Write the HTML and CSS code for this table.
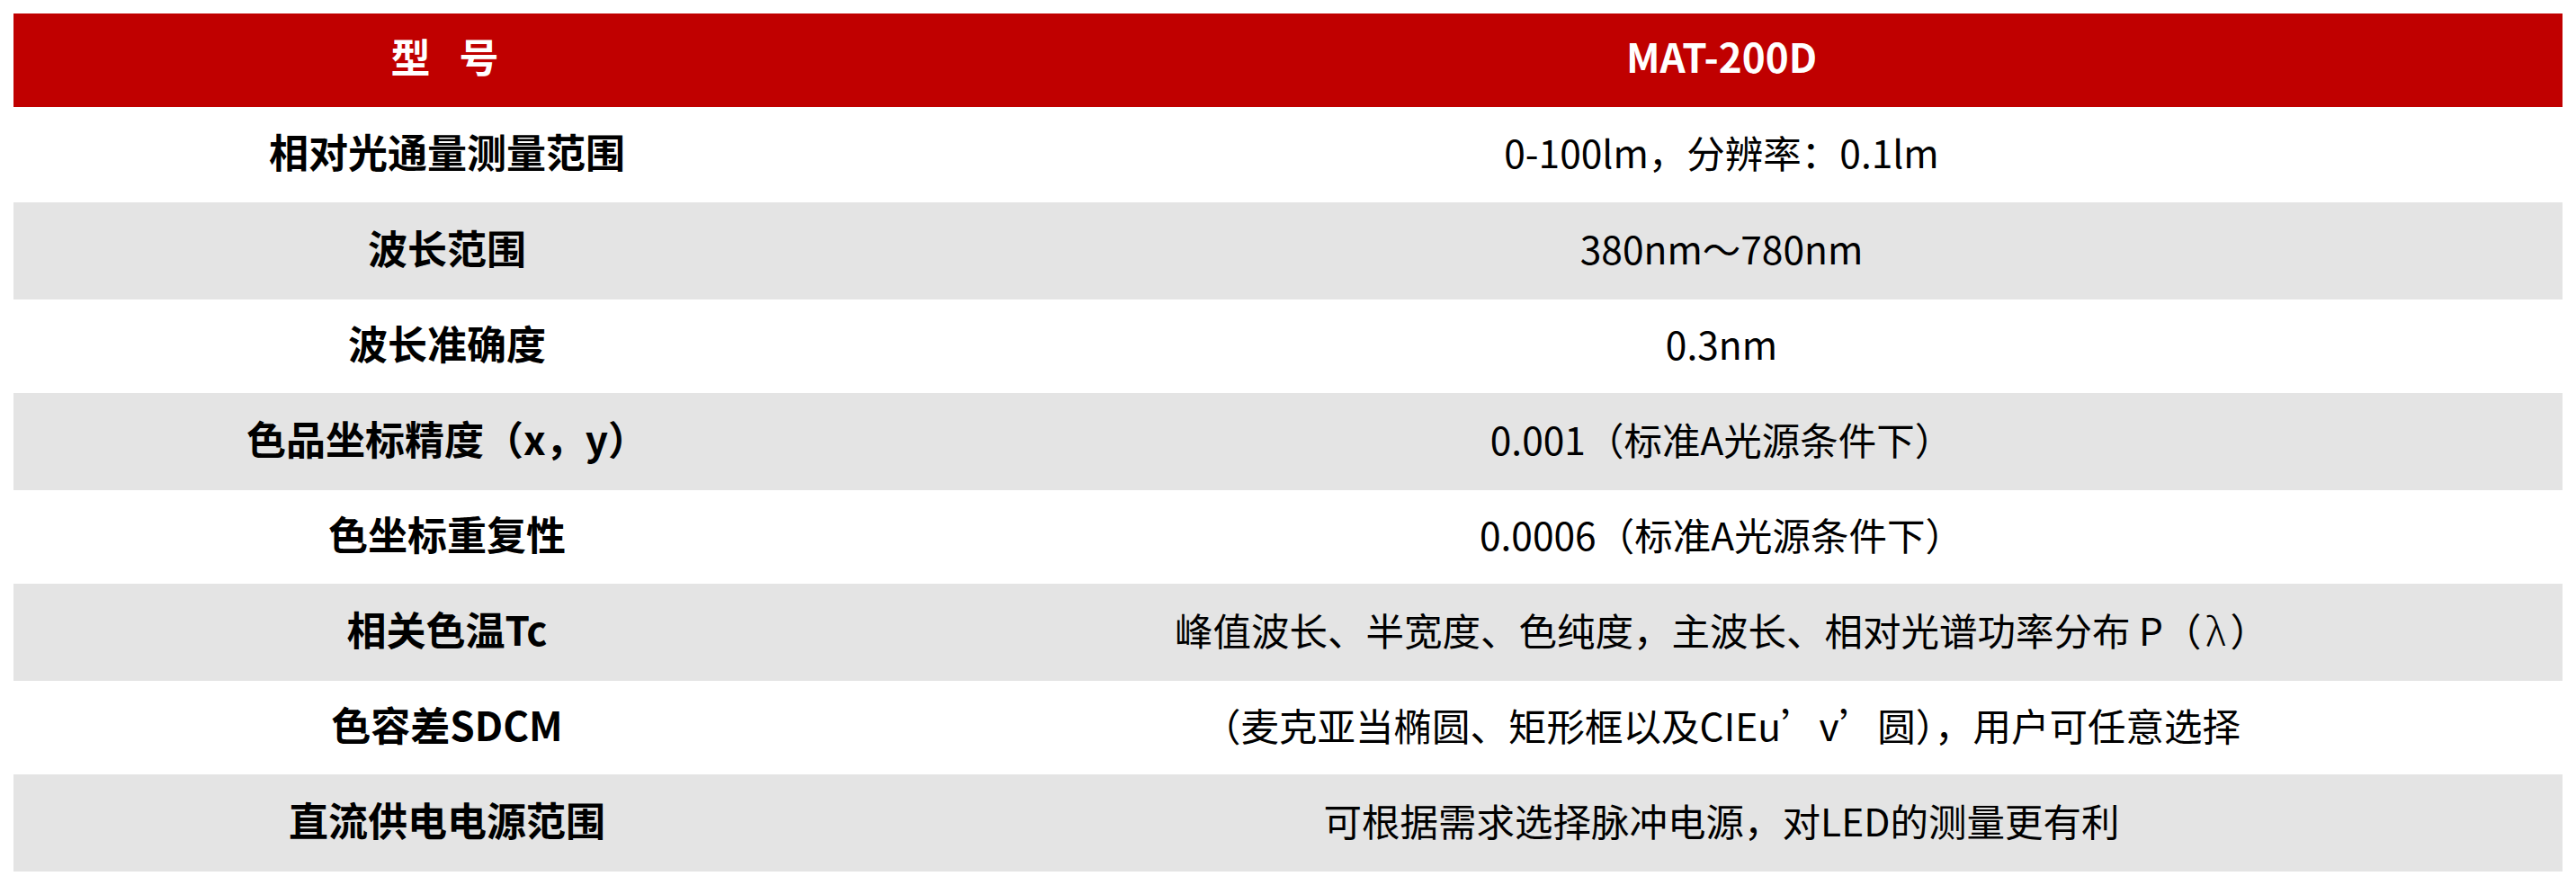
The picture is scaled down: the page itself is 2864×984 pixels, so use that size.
FILE: index.html
```html
<!DOCTYPE html>
<html lang="zh-CN">
<head>
<meta charset="utf-8">
<title>MAT-200D</title>
<link rel="stylesheet" href="styles.css">
</head>
<body>
<table class="spec">
  <colgroup><col class="c-name"><col class="c-val"></colgroup>
  <thead>
    <tr class="head"><th class="hname">型&ensp;号</th><th class="hval">MAT-200D</th></tr>
  </thead>
  <tbody>
    <tr class="r first"><td class="name">相对光通量测量范围</td><td class="val">0-100lm，分辨率：0.1lm</td></tr>
    <tr class="r gray"><td class="name">波长范围</td><td class="val">380nm～780nm</td></tr>
    <tr class="r white"><td class="name">波长准确度</td><td class="val">0.3nm</td></tr>
    <tr class="r gray"><td class="name">色品坐标精度（x，y）</td><td class="val">0.001（标准A光源条件下）</td></tr>
    <tr class="r white"><td class="name">色坐标重复性</td><td class="val">0.0006（标准A光源条件下）</td></tr>
    <tr class="r gray"><td class="name">相关色温Tc</td><td class="val">峰值波长、半宽度、色纯度，主波长、相对光谱功率分布 P（<span class="lam">λ</span>）</td></tr>
    <tr class="r white"><td class="name">色容差SDCM</td><td class="val">（麦克亚当椭圆、矩形框以及CIEu’v’圆），用户可任意选择</td></tr>
    <tr class="r gray"><td class="name">直流供电电源范围</td><td class="val">可根据需求选择脉冲电源，对LED的测量更有利</td></tr>
  </tbody>
</table>
</body>
</html>
```

FILE: styles.css
```css
html, body {
  margin: 0;
  padding: 0;
  background: #ffffff;
}
body {
  font-family: "Noto Sans CJK SC", "Noto Sans", sans-serif;
  color: #000000;
}
.spec {
  margin: 15px;
  width: 2834px;
  border-collapse: collapse;
  table-layout: fixed;
}
.c-name { width: 964px; }
.spec th, .spec td {
  padding: 0 0 8px 0;
  text-align: center;
  vertical-align: middle;
  line-height: 1.2;
  white-space: nowrap;
}
.head { background: #c00000; height: 104px; }
.head th { color: #ffffff; font-weight: 700; font-size: 44px; padding-bottom: 10px; }
.hname { letter-spacing: 5px; }
.first { height: 106px; }
.white { height: 104px; background: #ffffff; }
.gray { height: 108px; background: #e4e4e4; }
.name { font-weight: 700; font-size: 44px; }
.val { font-weight: 400; font-size: 42.5px; }
.lam { display: inline-block; margin: 0 5px; font-weight: 300; }
```
